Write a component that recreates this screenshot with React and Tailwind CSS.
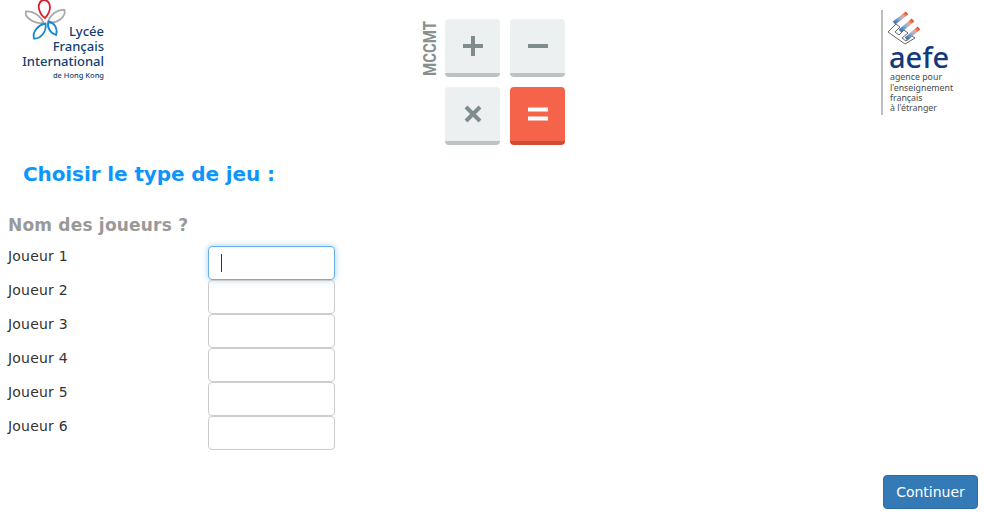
const players = ['Joueur 1', 'Joueur 2', 'Joueur 3', 'Joueur 4', 'Joueur 5', 'Joueur 6'];

const LfiLogo = () => (
  <svg width="130" height="90" viewBox="0 0 130 90" fill="none">
    <path d="M44 0 C40 0 38 5 39 9 C40 13 42 16 45 18 C48 15 50 11 50 7 C50 4 48 0 44 0 Z" stroke="#d9222a" strokeWidth="1.8" />
    <path d="M43.5 23 C41 16 33 10.5 26 11.5 C24 16 32 24 43.5 23 Z" stroke="#a9a9a9" strokeWidth="1.8" />
    <path d="M48 22.5 C50 14 58 9 64.5 10 C66 17 57 24 48 22.5 Z" stroke="#a9a9a9" strokeWidth="1.8" />
    <path d="M45.5 23.5 C38 25 32 32 34 38.5 C41 39 47 31 45.5 23.5 Z" stroke="#1b87d0" strokeWidth="1.8" />
    <path d="M48.5 21.5 C46.5 27 50 33 56 35 C58 29 55 23 48.5 21.5 Z" stroke="#1b87d0" strokeWidth="1.8" />
    <g fontFamily="'Noto Sans', sans-serif" fill="#123f73" fontWeight="500" textAnchor="end">
      <text x="104" y="36" fontSize="13">Lycée</text>
      <text x="104" y="51" fontSize="13">Français</text>
      <text x="104" y="66" fontSize="13">International</text>
      <text x="104" y="78" fontSize="7.5">de Hong Kong</text>
    </g>
  </svg>
);

const CalcKey = ({ red, children }) => (
  <div className={`flex h-[58px] w-[55px] items-center justify-center rounded-[4px] border-b-4 ${red ? 'border-[#cf4d36] bg-[#f6634b]' : 'border-[#bdc3c5] bg-[#ecf0f1]'}`}>
    {children}
  </div>
);

const CalcLogo = () => (
  <div className="flex gap-[8px]">
    <svg width="16" height="58" viewBox="0 0 16 58">
      <text
        transform="translate(14.5 57) rotate(-90)"
        fontFamily="'Roboto', sans-serif"
        fontSize="19"
        fontWeight="700"
        fill="#85908f"
        textLength="55"
        lengthAdjust="spacingAndGlyphs"
      >
        MCCMT
      </text>
    </svg>
    <div className="grid grid-cols-[55px_55px] gap-x-[10px] gap-y-[10px]">
      <CalcKey>
        <svg width="24" height="24" viewBox="0 0 24 24"><path d="M12 2v20M2 12h20" stroke="#7f8c8d" strokeWidth="4" /></svg>
      </CalcKey>
      <CalcKey>
        <svg width="24" height="24" viewBox="0 0 24 24"><path d="M2 12h20" stroke="#7f8c8d" strokeWidth="4" /></svg>
      </CalcKey>
      <CalcKey>
        <svg width="20" height="20" viewBox="0 0 20 20"><path d="M3 3l14 14M17 3L3 17" stroke="#7f8c8d" strokeWidth="4" /></svg>
      </CalcKey>
      <CalcKey red>
        <svg width="24" height="24" viewBox="0 0 24 24"><path d="M2 7.5h20M2 16.5h20" stroke="#fff" strokeWidth="4" /></svg>
      </CalcKey>
    </div>
  </div>
);

const AefeLogo = () => (
  <svg width="90" height="120" viewBox="0 0 90 120" fill="none">
    <defs>
      <linearGradient id="bar" x1="0" y1="1" x2="1" y2="0">
        <stop offset="0" stopColor="#2f6fb5" />
        <stop offset="0.5" stopColor="#9fb6d6" />
        <stop offset="0.7" stopColor="#f0a58c" />
        <stop offset="1" stopColor="#e0452c" />
      </linearGradient>
    </defs>
    <path d="M1 10v105" stroke="#a8a8a8" strokeWidth="1.5" />
    <path d="M7 32 L15 24 L19 27 L14 32 L18 35 L23 30 L27 33 L21 38 L25 41 L31 36 L34 38 L24 44 Z" stroke="#666" strokeWidth="1" />
    <path d="M13 23 L26 13" stroke="url(#bar)" strokeWidth="4" />
    <path d="M19 31 L32 20" stroke="url(#bar)" strokeWidth="4" />
    <path d="M25 39 L38 28" stroke="url(#bar)" strokeWidth="4" />
    <text x="8" y="68" fontFamily="'Noto Sans', sans-serif" fontSize="29" fontWeight="500" fill="#123a7a">aefe</text>
    <g fontFamily="'Noto Sans', sans-serif" fontSize="8.8" fill="#4a4a4a">
      <text x="9" y="79.5">agence pour</text>
      <text x="9" y="90.5">l'enseignement</text>
      <text x="9" y="100.5">français</text>
      <text x="9" y="110.5">à l'étranger</text>
    </g>
  </svg>
);

const App = () => {
  return (
    <div className="relative h-[516px] w-[984px] overflow-hidden bg-white font-['DejaVu_Sans',sans-serif] text-[#333]">
      <div className="flex h-[150px] items-start">
        <div className="w-[421px]">
          <LfiLogo />
        </div>
        <div className="w-[460px] pt-[19px]">
          <CalcLogo />
        </div>
        <div>
          <AefeLogo />
        </div>
      </div>

      <h1 className="mt-[10px] pl-[23px] text-[20px] leading-[28px] font-bold tracking-[-0.1px] text-[#0d95fc]">Choisir le type de jeu :</h1>

      <div className="mt-[27px] pl-[8px]">
        <h2 className="text-[17px] leading-[20px] font-bold tracking-[0.2px] text-[#999]">Nom des joueurs ?</h2>
        <div className="mt-[11px] flex flex-col">
          {players.map((name, i) => (
            <div key={name} className="flex h-[34px]">
              <label className="w-[200px] text-[14px] leading-[20px] tracking-[0.2px]">{name}</label>
              <div className={`flex h-[34px] w-[127px] items-center rounded-[4px] border px-3 ${i === 0 ? 'border-[#66afe9] shadow-[0_0_6px_rgba(102,175,233,0.6)]' : 'border-[#ccc]'}`}>
                {i === 0 && <span className="h-[18px] w-px bg-[#333]"></span>}
              </div>
            </div>
          ))}
        </div>
      </div>

      <div className="absolute right-[6px] bottom-[7px]">
        <button className="h-[34px] w-[95px] rounded-[4px] border border-[#2e6da4] bg-[#337ab7] text-[14px] text-white">Continuer</button>
      </div>
    </div>
  );
};

export default App;
